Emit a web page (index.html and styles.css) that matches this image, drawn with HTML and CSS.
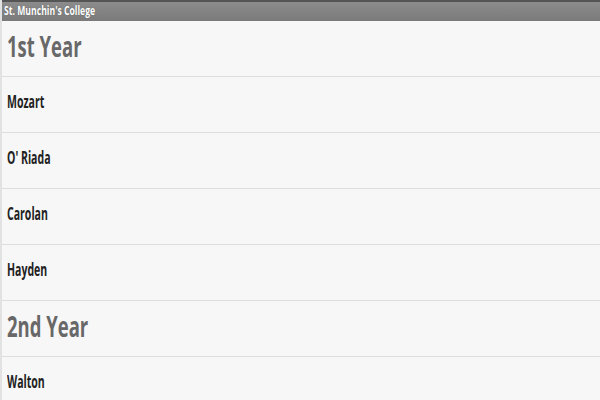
FILE: index.html
```html
<!DOCTYPE html>
<html lang="en">
<head>
  <meta charset="UTF-8" />
  <meta name="viewport" content="width=device-width, initial-scale=1.0" />
  <title>St. Munchin's College</title>
  <link rel="stylesheet" href="styles.css">
</head>
<body>
  <div class="titlebar"><span>St. Munchin's College</span></div>

  <ul class="list">
    <li class="section"><span>1st Year</span></li>
    <li class="item"><span>Mozart</span></li>
    <li class="item"><span>O' Riada</span></li>
    <li class="item"><span>Carolan</span></li>
    <li class="item"><span>Hayden</span></li>
    <li class="section"><span>2nd Year</span></li>
    <li class="item"><span>Walton</span></li>
  </ul>
</body>
</html>
```

FILE: styles.css
```css
body {
  margin: 0;
  background: #f7f7f7;
  font-family: "Open Sans", "Liberation Sans", sans-serif;
  height: 400px;
  overflow: hidden;
  border-left: 2px solid #e2e2e2;
  box-sizing: border-box;
}
.titlebar {
  height: 21px;
  box-sizing: border-box;
  border-top: 2px solid #555;
  background: linear-gradient(#8c8c8c, #7a7a7a);
  color: #fff;
  font-size: 12px;
  font-weight: bold;
  line-height: 18px;
  padding-left: 4px;
  margin-left: -2px;
  text-shadow: 0 0 1px #555;
}
.titlebar span,
.list li span {
  display: inline-block;
  transform: scaleX(0.66);
  transform-origin: left center;
  white-space: nowrap;
}
.titlebar span {
  transform: scaleX(0.72);
}
.list {
  list-style: none;
  margin: 0;
  padding: 0;
}
.list li {
  height: 56px;
  box-sizing: border-box;
  border-bottom: 1px solid #dedede;
  display: flex;
  align-items: center;
  padding-left: 5px;
  padding-bottom: 6px;
}
.section {
  font-size: 28px;
  font-weight: bold;
  color: #686868;
}
.item {
  font-size: 17px;
  font-weight: bold;
  color: #222;
}
.list li.item span {
  transform: scaleX(0.62);
}
```
